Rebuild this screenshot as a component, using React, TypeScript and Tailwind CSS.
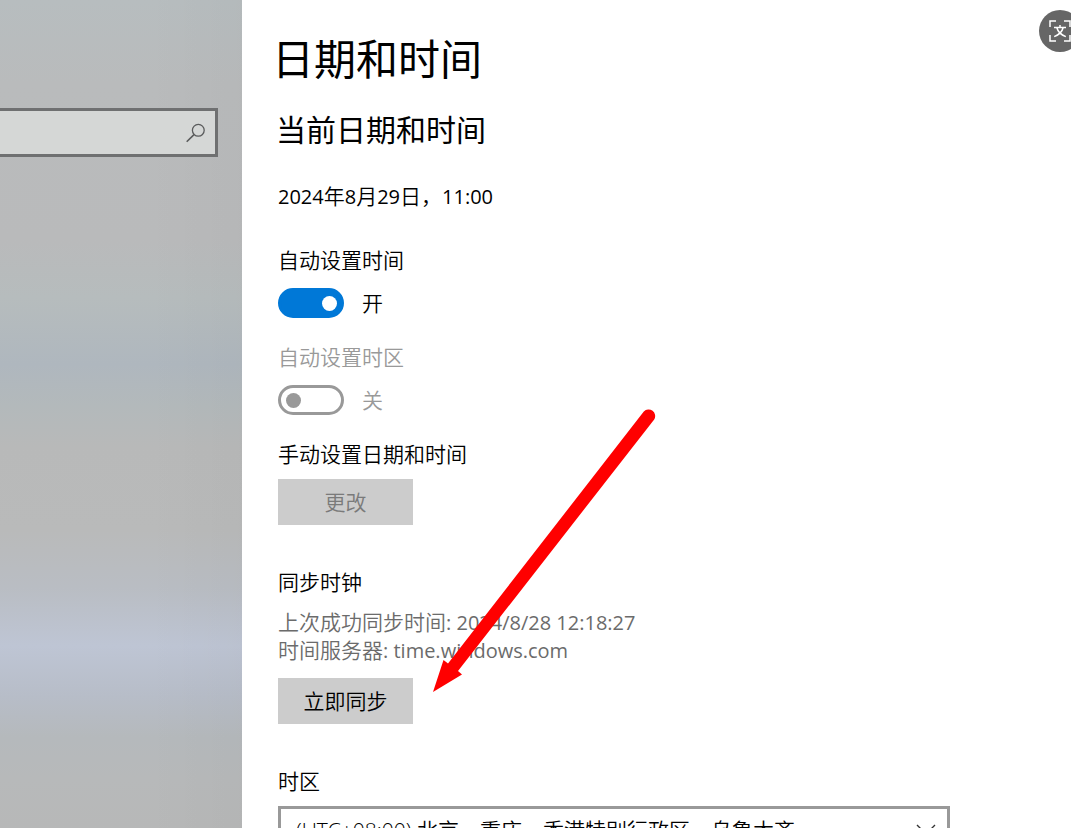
import type { ReactNode } from "react";

function Latin({ children }: { children: ReactNode }) {
  return <span className="text-[20px] leading-none font-normal">{children}</span>;
}

function Toggle({
  id,
  label,
  state,
  on = false,
  disabled = false,
}: {
  id: string;
  label: string;
  state: string;
  on?: boolean;
  disabled?: boolean;
}) {
  return (
    <div className={disabled ? "text-[#999999]" : "text-black"}>
      <label htmlFor={id} className="block">
        {label}
      </label>
      <div className="mt-[14px] flex h-[30px] items-center gap-[18px]">
        <input
          id={id}
          type="checkbox"
          role="switch"
          defaultChecked={on}
          disabled={disabled}
          className="flex h-[30px] w-[66px] shrink-0 appearance-none items-center rounded-full border-[3px] border-[#999999] px-[5px] before:size-[15px] before:rounded-full before:bg-[#999999] checked:justify-end checked:border-[#0078d7] checked:bg-[#0078d7] checked:px-1 checked:before:bg-white"
        />
        <span>{state}</span>
      </div>
    </div>
  );
}

function Sidebar() {
  return (
    <aside className="w-[242px] shrink-0 bg-[linear-gradient(to_right,rgba(0,0,0,0)_60%,rgba(0,0,0,0.02)),linear-gradient(to_bottom,#b7bdbf_0%,#b9bbbc_10%,#b9babb_29%,#b6bcbd_36%,#afb7be_44%,#b3b9bb_49%,#b8b9b9_54%,#b9baba_64%,#b9bdc3_71%,#bec5d4_78%,#b7bdc8_84%,#b5b9bc_89%,#b7b9ba_94%,#b7b8b8_100%)] pt-[108px] pr-6">
      <div className="relative">
        <input
          type="search"
          aria-label="查找设置"
          className="block h-[49px] w-full appearance-none rounded-none border-[3px] border-l-0 border-[#6f7071] bg-[#d5d7d6] pr-11 pl-4 outline-none"
        />
        <svg
          className="pointer-events-none absolute top-[15px] right-[12px]"
          width="20"
          height="20"
          viewBox="0 0 20 20"
          fill="none"
          stroke="#5a5b5c"
          strokeWidth="1.3"
          aria-hidden="true"
        >
          <circle cx="12.3" cy="7.3" r="5.9" />
          <path d="M8 11.6 0.7 18.8" strokeWidth="1.6" />
        </svg>
      </div>
    </aside>
  );
}

function Arrow() {
  return (
    <svg
      className="pointer-events-none absolute top-[408px] left-[190px]"
      width="226"
      height="286"
      viewBox="0 0 226 286"
      fill="#ff0000"
      aria-hidden="true"
    >
      <path d="M1 284 11.5 252 16 255.5 211.8 3.5A6.6 6.6 0 0 1 222.2 11.5L26 263 30 266.5Z" />
    </svg>
  );
}

export default function App() {
  return (
    <div className="relative flex h-screen overflow-hidden bg-white font-['Open_Sans','Noto_Sans_CJK_SC',sans-serif] text-[21px] leading-7 font-[350] text-black">
      <Sidebar />
      <main lang="zh-CN" className="relative min-w-0 flex-1 px-9 pt-[31px]">
        <h1 className="-ml-[6px] text-[42px] leading-[56px] font-normal">日期和时间</h1>
        <h2 className="mt-[23px] -ml-0.5 text-[30px] leading-10 font-normal">当前日期和时间</h2>
        <p className="mt-8">
          <Latin>2024</Latin>年<Latin>8</Latin>月<Latin>29</Latin>日，<Latin>11:00</Latin>
        </p>

        <div className="mt-9 flex flex-col gap-[25px]">
          <Toggle id="auto-time" label="自动设置时间" state="开" on />
          <Toggle id="auto-zone" label="自动设置时区" state="关" disabled />
          <section>
            <h3>手动设置日期和时间</h3>
            <button
              type="button"
              disabled
              className="mt-[11px] block h-[46px] w-[135px] bg-[#cccccc] text-[#7a7a7a]"
            >
              更改
            </button>
          </section>
        </div>

        <section className="mt-[43px]">
          <h3>同步时钟</h3>
          <div className="mt-3 text-[#6b6b6b]">
            <p>
              上次成功同步时间<Latin>: 2024/8/28 12:18:27</Latin>
            </p>
            <p>
              时间服务器<Latin>: time.windows.com</Latin>
            </p>
          </div>
          <button type="button" className="mt-[14px] block h-[46px] w-[135px] bg-[#cccccc]">
            立即同步
          </button>
        </section>

        <section className="mt-[43px]">
          <label htmlFor="zone" className="block">
            时区
          </label>
          <div className="relative mt-[11px] max-w-[672px]">
            <select
              id="zone"
              className="block h-12 w-full appearance-none rounded-none border-[3px] border-[#999999] bg-white pr-12 pl-[15px] outline-none"
            >
              <option>(UTC+08:00) 北京，重庆，香港特别行政区，乌鲁木齐</option>
            </select>
            <svg
              className="pointer-events-none absolute top-[18px] right-[14px]"
              width="20"
              height="12"
              viewBox="0 0 20 12"
              fill="none"
              stroke="#333333"
              strokeWidth="1.4"
              aria-hidden="true"
            >
              <path d="M1 1 10 10 19 1" />
            </svg>
          </div>
        </section>
        <Arrow />
      </main>

      <button
        type="button"
        aria-label="翻译"
        className="absolute top-[10px] -right-[10px] flex size-[42px] items-center justify-center rounded-full bg-[#666666]"
      >
        <svg width="22" height="22" viewBox="0 0 22 22" fill="none" stroke="#ffffff" strokeWidth="1.5" aria-hidden="true">
          <path d="M1 7V1H7M15 1H21V7M21 15V21H15M7 21H1V15" />
          <path d="M5 7.5H17M11 5V7.5M7.8 7.5C8.8 11.5 12 14.8 16.8 16.6M14.2 7.5C13.2 11.5 10 14.8 5.2 16.6" />
        </svg>
      </button>
    </div>
  );
}
